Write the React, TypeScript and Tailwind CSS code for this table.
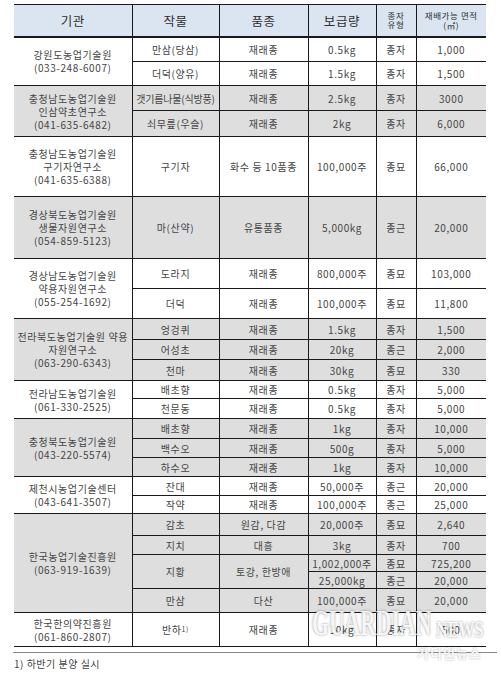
import React from 'react';

type Row = {
  h: number;
  crop?: React.ReactNode;
  cropSpan?: number;
  variety?: string;
  varietySpan?: number;
  amount: string;
  kind: string;
  area: string;
};

type Group = {
  org: string[];
  gray: boolean;
  rows: Row[];
};

const groups: Group[] = [
  {
    org: ['강원도농업기술원', '(033-248-6007)'],
    gray: false,
    rows: [
      { h: 25, crop: '만삼(당삼)', variety: '재래종', amount: '0.5kg', kind: '종자', area: '1,000' },
      { h: 24, crop: '더덕(양유)', variety: '재래종', amount: '1.5kg', kind: '종자', area: '1,500' },
    ],
  },
  {
    org: ['충청남도농업기술원', '인삼약초연구소', '(041-635-6482)'],
    gray: true,
    rows: [
      {
        h: 25,
        crop: <span className="tracking-[-0.2px]">갯기름나물(식방풍)</span>,
        variety: '재래종',
        amount: '2.5kg',
        kind: '종자',
        area: '3000',
      },
      { h: 26, crop: '쇠무릎(우슬)', variety: '재래종', amount: '2kg', kind: '종자', area: '6,000' },
    ],
  },
  {
    org: ['충청남도농업기술원', '구기자연구소', '(041-635-6388)'],
    gray: false,
    rows: [{ h: 60, crop: '구기자', variety: '화수 등 10품종', amount: '100,000주', kind: '종묘', area: '66,000' }],
  },
  {
    org: ['경상북도농업기술원', '생물자원연구소', '(054-859-5123)'],
    gray: true,
    rows: [{ h: 62, crop: '마(산약)', variety: '유통품종', amount: '5,000kg', kind: '종근', area: '20,000' }],
  },
  {
    org: ['경상남도농업기술원', '약용자원연구소', '(055-254-1692)'],
    gray: false,
    rows: [
      { h: 30, crop: '도라지', variety: '재래종', amount: '800,000주', kind: '종묘', area: '103,000' },
      { h: 30, crop: '더덕', variety: '재래종', amount: '100,000주', kind: '종묘', area: '11,800' },
    ],
  },
  {
    org: ['전라북도농업기술원 약용', '자원연구소', '(063-290-6343)'],
    gray: true,
    rows: [
      { h: 21, crop: '엉겅퀴', variety: '재래종', amount: '1.5kg', kind: '종자', area: '1,500' },
      { h: 20, crop: '어성초', variety: '재래종', amount: '20kg', kind: '종근', area: '2,000' },
      { h: 21, crop: '천마', variety: '재래종', amount: '30kg', kind: '종묘', area: '330' },
    ],
  },
  {
    org: ['전라남도농업기술원', '(061-330-2525)'],
    gray: false,
    rows: [
      { h: 18, crop: '배초향', variety: '재래종', amount: '0.5kg', kind: '종자', area: '5,000' },
      { h: 20, crop: '천문동', variety: '재래종', amount: '0.5kg', kind: '종자', area: '5,000' },
    ],
  },
  {
    org: ['충청북도농업기술원', '(043-220-5574)'],
    gray: true,
    rows: [
      { h: 20, crop: '배초향', variety: '재래종', amount: '1kg', kind: '종자', area: '10,000' },
      { h: 19, crop: '백수오', variety: '재래종', amount: '500g', kind: '종자', area: '5,000' },
      { h: 19, crop: '하수오', variety: '재래종', amount: '1kg', kind: '종자', area: '10,000' },
    ],
  },
  {
    org: ['제천시농업기술센터', '(043-641-3507)'],
    gray: false,
    rows: [
      { h: 19, crop: '잔대', variety: '재래종', amount: '50,000주', kind: '종근', area: '20,000' },
      { h: 18, crop: '작약', variety: '재래종', amount: '100,000주', kind: '종근', area: '25,000' },
    ],
  },
  {
    org: ['한국농업기술진흥원', '(063-919-1639)'],
    gray: true,
    rows: [
      { h: 22, crop: '감초', variety: '원감, 다감', amount: '20,000주', kind: '종묘', area: '2,640' },
      { h: 19, crop: '지치', variety: '대흥', amount: '3kg', kind: '종자', area: '700' },
      { h: 17, crop: '지황', cropSpan: 2, variety: '토강, 한방애', varietySpan: 2, amount: '1,002,000주', kind: '종묘', area: '725,200' },
      { h: 17, amount: '25,000kg', kind: '종근', area: '20,000' },
      { h: 24, crop: '만삼', variety: '다산', amount: '100,000주', kind: '종묘', area: '20,000' },
    ],
  },
  {
    org: ['한국한의약진흥원', '(061-860-2807)'],
    gray: false,
    rows: [
      {
        h: 34,
        crop: (
          <span>
            반하<sup className="text-[7px] relative -top-[2px]">1)</sup>
          </span>
        ),
        variety: '재래종',
        amount: '10kg',
        kind: '종자',
        area: '500',
      },
    ],
  },
];

const td = 'border border-[#1a1a1a] text-center align-middle p-0 whitespace-nowrap';

export default function App() {
  return (
    <div
      className="relative w-[501px] h-[681px] bg-white text-[#454545] overflow-hidden"
      style={{ fontFamily: '"Noto Sans CJK KR", "Noto Sans", sans-serif' }}
    >
      <div className="pt-[4px] pl-[14px]">
        <table className="table-fixed border-collapse w-[472px] text-[10px] leading-[13px] tracking-[0.6px]">
          <colgroup>
            <col className="w-[118px]" />
            <col className="w-[87px]" />
            <col className="w-[89px]" />
            <col className="w-[68px]" />
            <col className="w-[40px]" />
            <col className="w-[70px]" />
          </colgroup>
          <thead>
            <tr className="h-[32px] bg-[#dbe5f1] text-[12.5px] text-[#2e2e2e]">
              <th className={`${td} font-normal border-l-0 border-b-2`}>기관</th>
              <th className={`${td} font-normal border-b-2`}>작물</th>
              <th className={`${td} font-normal border-b-2`}>품종</th>
              <th className={`${td} font-normal border-b-2`}>보급량</th>
              <th className={`${td} font-normal border-b-2 text-[8.5px] leading-[9px]`}>
                종자
                <br />
                유형
              </th>
              <th className={`${td} font-normal border-b-2 border-r-0 text-[8.5px] leading-[10px]`}>
                재배가능 면적
                <br />
                (㎡)
              </th>
            </tr>
          </thead>
          <tbody>
            {groups.map((g, gi) =>
              g.rows.map((r, ri) => (
                <tr key={`${gi}-${ri}`} className={g.gray ? 'bg-[#dedede]' : 'bg-white'} style={{ height: r.h }}>
                  {ri === 0 && (
                    <td rowSpan={g.rows.length} className={`${td} border-l-0`}>
                      {g.org.map((line, li) => (
                        <div key={li}>{line}</div>
                      ))}
                    </td>
                  )}
                  {r.crop !== undefined && (
                    <td rowSpan={r.cropSpan} className={td}>
                      {r.crop}
                    </td>
                  )}
                  {r.variety !== undefined && (
                    <td rowSpan={r.varietySpan} className={td}>
                      {r.variety}
                    </td>
                  )}
                  <td className={td}>{r.amount}</td>
                  <td className={td}>{r.kind}</td>
                  <td className={`${td} border-r-0`}>{r.area}</td>
                </tr>
              )),
            )}
          </tbody>
        </table>
        <div className="mt-[5px] w-[484px] -ml-[1px] border-t border-[#8a8a8a]" />
        <div className="mt-[3px] text-[10px] text-[#444] tracking-[0.5px]">1) 하반기 분양 실시</div>
      </div>

      <div className="absolute left-[312px] top-[606px] pointer-events-none">
        <span
          className="inline-block origin-left scale-x-[0.62] text-[35px] font-bold leading-none text-white/90 [text-shadow:0_0_3px_rgba(0,0,0,0.45)]"
          style={{ fontFamily: '"Liberation Serif", serif' }}
        >
          GUARDIAN
        </span>
      </div>
      <div className="absolute left-[436px] top-[618px] pointer-events-none">
        <span
          className="inline-block origin-left scale-x-[0.7] text-[23px] font-bold leading-none text-white/90 [text-shadow:0_0_3px_rgba(0,0,0,0.45)]"
          style={{ fontFamily: '"Liberation Serif", serif' }}
        >
          NEWS
        </span>
      </div>
      <div className="absolute left-[417px] top-[646px] text-[13px] leading-none font-bold text-white/90 tracking-[1px] [text-shadow:0_0_2px_rgba(0,0,0,0.35)] pointer-events-none">
        가디언뉴스
      </div>
    </div>
  );
}
